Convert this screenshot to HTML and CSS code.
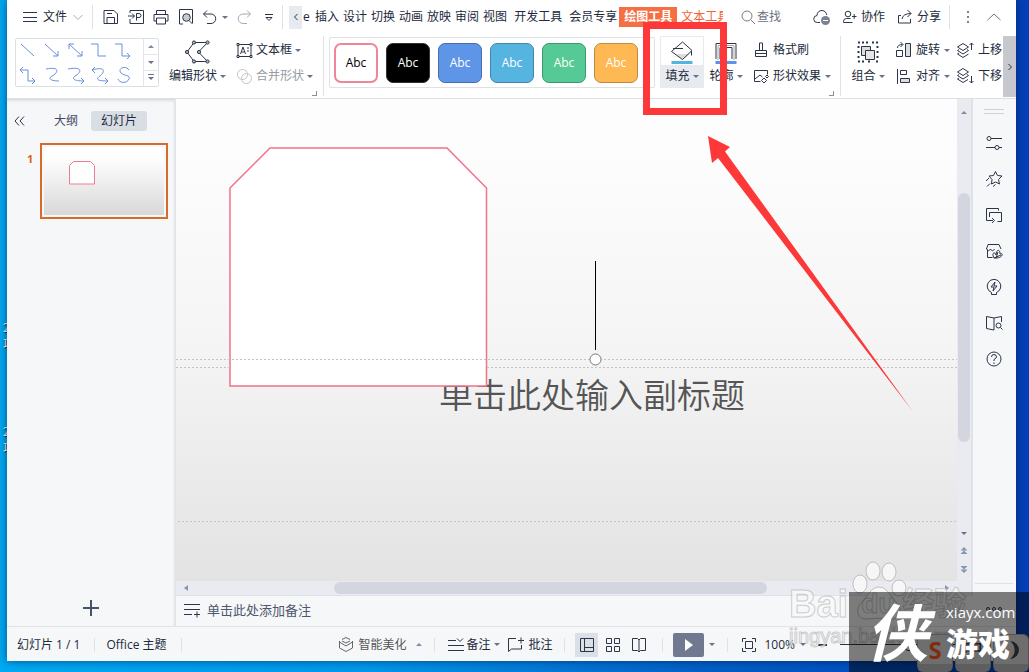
FILE: index.html
```html
<!DOCTYPE html>
<html lang="zh-CN">
<head>
<meta charset="utf-8">
<title>WPS 演示</title>
<link rel="stylesheet" href="styles.css">
</head>
<body>
<div class="desk-labels" aria-hidden="true"><span>2</span><span>项</span><span class="second">2</span><span>项</span></div>
<div class="window">
  <header class="menubar">
    <button class="file"><svg width="16" height="16"><path d="M1 3.500h14M1 8.500h14M1 12.500h14"/></svg><span>文件</span><svg class="soft" width="12" height="12"><path d="M1.500 4l4.500 4.500L10.500 4"/></svg></button>
    <i class="rule"></i>
    <div class="quick">
      <button aria-label="保存"><svg width="18" height="18"><path d="M2 2.500h10l3.500 3.500v9.500h-13.500zM5 15.500v-6h7.500v6M5 5.500h5"/></svg></button>
      <button aria-label="输出PDF"><svg width="18" height="18"><path d="M3 5V2.500h13.500v13H3V11M1 8h6.500M5 5.500l2.500 2.500L5 10.500M9.500 12.500V5.500h2.500q2 0 2 2t-2 2H9.500"/></svg></button>
      <button aria-label="打印"><svg width="18" height="18"><path d="M4.500 6V2.500h9V6M4.500 13H2V6.500h14V13h-2.500M4.500 10h9v6h-9z"/></svg></button>
      <button aria-label="打印预览"><svg width="18" height="18"><path d="M6 16H2.500V1.500h13V15M15.500 16l-3-3"/><circle cx="9.500" cy="9.500" r="3.800" fill="#c8ccd2"/></svg></button>
      <button class="undo" aria-label="撤销"><svg width="18" height="18"><path d="M6 2.500L2.500 6 6 9.500M2.500 6H10a4.500 4.500 0 010 9.500H6"/></svg><b class="caret"></b></button>
      <button aria-label="恢复"><svg class="soft" width="18" height="18"><path d="M12 2.500L15.500 6 12 9.500M15.500 6H8A4.500 4.500 0 008 15.500h4"/></svg></button>
      <button aria-label="自定义"><svg width="10" height="10"><path d="M1 2.500h8M2 5.500l3 3 3-3z" stroke-width="1"/></svg></button>
    </div>
    <i class="rule"></i>
    <button class="tab-scroll" aria-label="向左滚动"><svg width="8" height="10"><path d="M5.500 2l-3 3 3 3"/></svg></button>
    <nav class="tabs">
      <a href="#" class="cut">e</a><a href="#">插入</a><a href="#">设计</a><a href="#">切换</a><a href="#">动画</a><a href="#">放映</a><a href="#">审阅</a><a href="#">视图</a><a href="#" class="wide">开发工具</a><a href="#" class="wide">会员专享</a><a href="#" class="active">绘图工具</a><a href="#" class="context">文本工具</a>
    </nav>
    <div class="account">
      <button class="search"><svg width="16" height="16"><circle cx="7" cy="7" r="5"/><path d="M11 11l4 4"/></svg>查找</button>
      <button class="cloud" aria-label="云同步"><svg width="18" height="18"><path d="M7 14.500H4.500a3.500 3.500 0 01-.5-7C4 4 6.500 2.500 9 2.500s4.500 2 4.700 4.500"/><circle cx="12.500" cy="12.500" r="4.500" fill="#7b8291" stroke="none"/><path d="M10 12.500h5" stroke="#fff"/></svg></button>
      <button><svg width="15" height="16"><circle cx="6" cy="5" r="2.800"/><path d="M1.500 13.500v-1q0-3 3-3h4M1.500 13.500h9M10 7.500h4.500M12.200 5v5"/></svg>协作</button>
      <button class="share"><svg width="16" height="16"><path d="M4 6.500H1.500v7.500h12V10M5 10q1-5.500 9-5.500M10.500 1l3.500 3.500L10.500 8"/></svg>分享</button>
      <i class="rule"></i>
      <button class="more" aria-label="更多"><svg width="4" height="14"><path d="M2 1v2M2 6v2M2 11v2"/></svg></button>
      <button class="fold" aria-label="折叠功能区"><svg width="16" height="12"><path d="M1.500 9L8 3l6.500 6"/></svg></button>
    </div>
  </header>

  <section class="ribbon">
    <div class="lines">
      <svg width="118" height="48"><g>
        <path d="M5 5l13 12M29 5l13 12M42 12v5h-5M53 5l13 12M53 10V5h5M66 12v5h-5M75 5h7v12h8M99 5h7v12h8M111 14l3 3-3 3"/>
        <path d="M4 31h8v11h7M7 28l-3 3 3 3M16 39l3 3-3 3M30 30c16-3 11 5 6 7-5 3 0 5 7 5M52 30c16-3 13 4 7 7-5 4 3 5 9 5M65 39l3 3-3 3M79 28l-3 3 3 3M76 31c14-4 13 2 8 6-6 4 0 5 8 5M89 39l3 3-3 3M113 31c-3-5-12-2-8 3 3 3 10 2 8 6-2 5-10 4-11 0"/></g></svg>
      <div class="spin"><button aria-label="上一行"><b class="caret up"></b></button><button aria-label="下一行"><b class="caret"></b></button><button class="all" aria-label="全部"><b class="caret"></b></button></div>
    </div>
    <button class="tall edit"><svg width="28" height="26"><path d="M10 3.500h13.500l-9 9.500 9 9.500H10L3 13z"/><g fill="#aeb4bd"><circle cx="10" cy="3.500" r="1.600"/><circle cx="23.500" cy="3.500" r="1.600"/><circle cx="15" cy="13" r="1.600"/><circle cx="23.500" cy="22.500" r="1.600"/><circle cx="10" cy="22.500" r="1.600"/><circle cx="3" cy="13" r="1.600"/></g></svg><span>编辑形状<b class="caret"></b></span></button>
    <div class="pair textpair">
      <button><svg width="17" height="17"><path d="M2 2.500h13v12H2z"/><path fill="#fff" d="M1 1.500h2v2H1zM14 1.500h2v2h-2zM1 13.500h2v2H1zM14 13.500h2v2h-2z"/><path d="M4.500 12L7 5l2.500 7M5.500 10h3M11 6h2M11 9h2"/></svg>文本框<b class="caret"></b></button>
      <button class="disabled"><svg width="17" height="17"><circle cx="6.500" cy="6.500" r="5"/><circle cx="10.500" cy="10.500" r="5"/></svg>合并形状<b class="caret"></b></button>
      <i class="corner"></i>
    </div>
    <i class="rule"></i>
    <div class="styles">
      <button class="s1">Abc</button><button class="s2">Abc</button><button class="s3">Abc</button><button class="s4">Abc</button><button class="s5">Abc</button><button class="s6">Abc</button>
    </div>
    <button class="tall fill"><svg width="26" height="26"><path d="M7 15h14l-7.500 5.500z" fill="#ddd" stroke="none"/><path d="M4 9.500h10M2.500 12.500L13.500 3l9.500 8.500-9.500 9zM22.500 12v4.500"/><path d="M2.500 23.500h21" stroke="#55b4e0" stroke-width="3"/></svg><span>填充<b class="caret"></b></span></button>
    <button class="tall outline"><svg width="26" height="26"><path d="M3 20V4.500h20V20M7 20V8.500h12V20"/><path d="M5 21V6.500h16V21" stroke="#aaa"/><path d="M2.500 23.500h21" stroke="#5b94e8" stroke-width="3"/></svg><span>轮廓<b class="caret"></b></span></button>
    <div class="pair effects">
      <button><svg width="16" height="18"><path d="M6.500 9V2h3v7M2.500 9.500h11v6h-11zM3 12.500h10"/></svg>格式刷</button>
      <button><svg width="16" height="17"><path d="M7.500 13.500H1.500V2.500h13v4M2 11l5-4 2.500 2M8.500 12.500L11 10l2.500 2.500L11 15zM12.500 8.500L14 7l1.500 1.500L14 10z"/></svg>形状效果<b class="caret"></b></button>
      <i class="corner"></i>
    </div>
    <i class="rule"></i>
    <button class="tall group"><svg width="26" height="26"><path d="M6.500 7.500h9v9h-9z" fill="#ddd"/><path d="M10.500 11.500h9v9h-9z" fill="#e6e6e6"/><path d="M3 3.500h2M7 3.500h2M11 3.500h2M17 3.500h2M21 3.500h2M3 22.500h2M7 22.500h2M13 22.500h2M21 22.500h2M3.500 7v2M3.500 12v2M3.500 17v2M22.500 7v2M22.500 12v2M22.500 17v2" stroke-width="2"/></svg><span>组合<b class="caret"></b></span></button>
    <div class="pair arrange">
      <button><svg width="17" height="17"><path d="M10.500 1.500h5v13h-5z" fill="#ddd"/><path d="M1.500 8.500h6v6h-6zM2.500 6q0-3.500 5-3.500M5.500 0l2.500 2.500-2.500 2.500"/></svg>旋转<b class="caret"></b></button>
      <button><svg width="17" height="17"><path d="M2.500 1v15M5.500 2.500h6v4h-6z"/><path d="M5.500 10.500h9v4h-9z" fill="#ddd"/></svg>对齐<b class="caret"></b></button>
    </div>
    <div class="pair order">
      <button><svg width="18" height="18"><path d="M1.500 6L7 2.500 12.500 6 7 9.500zM3 8.500l-1.500 1L7 13l5.500-3.500-1.500-1M3 12l-1.500 1L7 16.500l5.500-3.500M15.500 9V2M13.500 4l2-2 2 2"/></svg>上移</button>
      <button><svg width="18" height="18"><path d="M1.500 5L7 1.500 12.500 5 7 8.500zM3 7.500l-1.500 1L7 12l5.500-3.500-1.500-1M3 11l-1.500 1L7 15.500l5-3M15.500 9v7M13.500 14l2 2 2-2"/></svg>下移</button>
    </div>
    <button class="ribbon-next" aria-label="向右滚动"><svg width="8" height="10"><path d="M2.500 2l3 3-3 3"/></svg></button>
  </section>

  <main class="work">
    <aside class="thumbs">
      <div class="switch"><button class="collapse" aria-label="收起"><svg width="14" height="14"><path d="M6 2.500L2 7l4 4.500M11 2.500L7 7l4 4.500"/></svg></button><button>大纲</button><button class="on">幻灯片</button></div>
      <div class="thumb-row"><span>1</span><a href="#" class="thumb" aria-label="幻灯片 1"><svg width="120" height="68"><path d="M25.500 18.500l4-4h17l4 4v18.500h-25z" fill="#fff" stroke="#ef7c91"/></svg></a></div>
      <button class="add" aria-label="新建幻灯片"><svg width="18" height="18"><path d="M9 1v16M1 9h16" stroke="#47516c" stroke-width="2"/></svg></button>
    </aside>
    <section class="center">
      <div class="slide">
        <h1>单击此处输入副标题</h1>
        <svg class="drawing" width="100%" height="100%">
          <path d="M54 89l40-40h177l39.500 40v198H54z" fill="#fff" stroke="#ee7488" stroke-width="1.500"/>
          <g stroke="#c4c4c4" stroke-dasharray="2 2"><line x1="0" y1="260.500" x2="100%" y2="260.500"/><line x1="0" y1="268.500" x2="54" y2="268.500"/><line x1="311" y1="268.500" x2="100%" y2="268.500"/><line x1="2" y1="422.500" x2="100%" y2="422.500"/></g>
          <path d="M419.500 162v89" stroke="#000"/><circle cx="419.500" cy="260.500" r="5.500" fill="#fff" stroke="#777"/>
        </svg>
      </div>
      <div class="vscroll"><b class="caret up"></b><i class="track"></i><b class="caret"></b><b class="double up2"></b><b class="double"></b></div>
      <div class="hscroll"><b class="left"></b><i></i><b class="right"></b></div>
      <button class="notes"><svg width="18" height="16"><path d="M1 2.500h16M1 7.500h16M1 12.500h8M11 12.500h6M14 9.500v6"/></svg>单击此处添加备注</button>
    </section>
    <aside class="tools">
      <i class="grip"></i>
      <button aria-label="设置"><svg width="18" height="18"><circle cx="4" cy="4.500" r="2"/><path d="M6 4.500h11M1 13.500h9M14 13.500h3"/><circle cx="12" cy="13.500" r="2"/></svg></button>
      <button aria-label="动画"><svg width="18" height="18"><path d="M10.500 1.500l2 4 4.500.500-3.500 3.500 1 4.500-4-2-4 2 .5-4.500L4 6l4.500-.5zM1 11l3-3M2 16.500l3-3M8 16.500l2.500-2"/></svg></button>
      <button aria-label="切换"><svg width="18" height="18"><path d="M13.500 4.500V2.500H1.500v12H8M4.500 11V6.500h12v9h-4M7 12l2.500 2.500L7 17"/></svg></button>
      <button aria-label="素材"><svg width="18" height="18"><path d="M2.500 8v7.500h5M1.500 7L3 2.500h11L16 7M1.500 6.500q2 4 4 .5 2 3.500 4 0"/><path d="M9 16c-3-5 1-7 2-3 0-5 4-7 4-1 4-2 3 5-6 4zM9 16l7-3M11 16l2-6"/></svg></button>
      <button aria-label="智能"><svg width="18" height="18"><path d="M6.500 14.500a6.800 6.800 0 115 0V16.500h-5zM10 4L6 9h3l-1 4 4-5H9z"/></svg></button>
      <button aria-label="查阅"><svg width="18" height="18"><path d="M9 4L1.500 2.500v12L9 16V4l7.500-1.500V8"/><circle cx="13.500" cy="11.500" r="2.500"/><path d="M15.500 13.500l2 2"/></svg></button>
      <button aria-label="帮助"><svg width="18" height="18"><circle cx="9" cy="9" r="7"/><path d="M6.500 7q0-2.500 2.500-2.500T11.500 7Q11.500 8 9 9.500V11M9 12.500v1.500"/></svg></button>
      <button class="dots" aria-label="更多工具"><svg width="18" height="6"><circle cx="3" cy="3" r="1.500"/><circle cx="9" cy="3" r="1.500"/><circle cx="15" cy="3" r="1.500"/></svg></button>
    </aside>
  </main>

  <footer class="status">
    <span>幻灯片 1 / 1</span><i class="rule"></i><span>Office 主题</span><i class="rule"></i>
    <div class="status-tools">
      <button class="beauty"><svg width="16" height="17"><path d="M4 3.500l4-2 4 2M4 5l4 2 4-2M1.500 5v7L8 15.500l6.500-3.500V5M1.500 6L8 10l6.500-4"/></svg>智能美化<b class="caret up"></b></button>
      <i class="rule"></i>
      <button class="memo"><svg width="18" height="16"><path d="M1 3.500h8M1 8.500h16M1 13.500h16M10 1.500l3 3 3-3"/></svg>备注<b class="caret"></b></button>
      <button class="comment"><svg width="17" height="17"><path d="M9 2.500H1.500v13l3-2.500h10V9M11 4.500h6M14 1.500v6"/></svg>批注</button>
      <i class="rule"></i>
      <div class="views">
      <button class="on" aria-label="普通视图"><svg width="16" height="16"><path d="M1.500 1.500h13v13h-13zM5.500 1.500v13M5.500 10.500h9"/></svg></button>
      <button aria-label="浏览视图"><svg width="16" height="16"><path d="M1.500 1.500h5v5h-5zM9.500 1.500h5v5h-5zM1.500 9.500h5v5h-5zM9.500 9.500h5v5h-5z"/></svg></button>
      <button aria-label="阅读视图"><svg width="16" height="16"><path d="M8 3L6.500 1.500h-5v12h5L8 15l1.500-1.500h5v-12h-5L8 3v12"/></svg></button>
      </div>
      <i class="rule"></i>
      <button class="play" aria-label="放映"><svg width="12" height="14"><path d="M2 1v12l8-6z" fill="#fff" stroke="none"/></svg></button><b class="caret"></b>
      <i class="rule"></i>
      <button class="zoom"><svg width="16" height="16"><path d="M1.500 5V1.500H5M11 1.500h3.500V5M14.500 11v3.500H11M5 14.500H1.500V11M4.500 4.500h7v7h-7z"/></svg>100%<b class="caret"></b></button>
      <button class="minus" aria-label="缩小"></button>
      <input type="range" min="10" max="190" value="100" aria-label="缩放">
    </div>
  </footer>
</div>

<svg class="callout" width="300" height="400" aria-hidden="true"><path d="M3.500 3.500h77v86h-77z" fill="none" stroke="#fd3838" stroke-width="7"/><path d="M65 114l22 11-5 4.500L269.500 389 75 136l-6 5z" fill="#fd3838" stroke="none"/></svg>
<div class="baidu" aria-hidden="true">
  <svg width="64" height="70"><g fill="#fafafa" fill-opacity=".8" stroke="#a9a9a9" stroke-opacity=".7"><ellipse cx="22" cy="10" rx="7" ry="9"/><ellipse cx="38" cy="11" rx="7" ry="9"/><ellipse cx="9" cy="23" rx="7" ry="9"/><ellipse cx="48" cy="27" rx="7" ry="8"/><path d="M28 26c8 0 11 9 17 15 8 8 4 18-6 17-9-1-15-1-22 0-10 1-14-9-6-17 6-6 9-15 17-15z"/></g></svg>
  <div class="baidu-name"><span>Bai</span><span class="du">du</span><span class="cn">经验</span></div>
  <div class="baidu-url">jingyan.baidu.com</div>
</div>
<div class="ime" aria-hidden="true"><span class="sogou">S</span><span>中</span><span><svg width="20" height="20"><path d="M9 1a9 9 0 110 18 11 11 0 000-18z"/></svg></span></div>
<div class="brand"><span class="mark">侠</span><div><small>xiayx.com</small><strong>游戏</strong></div></div>
</body>
</html>
```
FILE: styles.css
```css
* { box-sizing: border-box; }
body {
  position: relative;
  margin: 0;
  height: 100vh;
  min-height: 560px;
  overflow: hidden;
  font: 12px/18px "Open Sans", "Noto Sans CJK SC", sans-serif;
  color: #222b3c;
  background: linear-gradient(90deg, #00aaf3 0%, #0099eb 35%, #0060c8 68%, #0340b8 100%);
}
button, input { font: inherit; color: inherit; }
button { display: inline-flex; align-items: center; justify-content: center; border: 0; padding: 0; background: none; white-space: nowrap; }
a { color: inherit; text-decoration: none; }
svg { flex: none; fill: none; stroke: #2c3547; stroke-width: 1; }
.rule { flex: none; width: 1px; height: 20px; background: #e0e2e6; }
.caret { flex: none; width: 0; height: 0; margin-left: 3px; border: 3px solid transparent; border-top-color: #68728a; border-bottom: 0; }
.caret.up { border-top: 0; border-bottom: 3px solid #7f8ca5; }
.soft { stroke: #a7abb2; }

.desk-labels { position: absolute; top: 318px; left: 3px; width: 8px; display: flex; flex-direction: column; overflow: hidden; color: #fff; font-family: "Noto Sans CJK SC", sans-serif; text-shadow: 1px 1px 1px #023; line-height: 17px; }
.desk-labels .second { margin-top: 70px; }

.window { position: relative; display: flex; flex-direction: column; height: calc(100% - 11px); margin: 0 13px 0 7px; background: #f6f7f9; box-shadow: 0 0 9px rgba(0, 20, 60, .6); }

.menubar { flex: none; display: flex; align-items: center; height: 34px; padding: 0 14px 0 15px; background: #fff; }
.menubar .file { gap: 5px; }
.menubar .rule { height: 24px; margin: 0 5px 0 8px; }
.quick { display: flex; }
.quick button { width: 25px; height: 24px; }
.quick .undo { width: 33px; gap: 0; }
.menubar .quick + .rule { margin: 0 6px 0 1px; }
.tab-scroll { flex: none; width: 13px; height: 23px; background: #e7eaee; }
.tabs { flex: 0 1 420px; min-width: 0; display: flex; gap: 4px; margin-left: 1px; overflow: hidden; line-height: 20px; white-space: nowrap; }
.tabs .cut { width: 8px; flex: none; }
.tabs .wide { margin-left: 3px; }
.tabs .active { margin-left: -2px; padding: 0 5px; background: #f66f43; color: #fff; font-weight: 700; }
.tabs .context { color: #ee6535; }
.account { flex: none; display: flex; align-items: center; margin-left: auto; }
.account button { gap: 4px; }
.account .search { gap: 1px; color: #6c727d; }
.account .search svg { stroke: #777e89; }
.account .cloud { margin: 0 11px 0 32px; }
.account .share { margin-left: 12px; }
.account .rule { margin: 0 0 0 8px; }
.account .more { margin-left: 16px; }
.account .more svg { stroke-width: 2; stroke: #7b8291; }
.account .fold { margin-left: 16px; }
.account .fold svg { stroke: #6c727d; }

.ribbon { flex: none; display: flex; height: 65px; padding: 2px 0 0 8px; background: #fff; border-bottom: 1px solid #dedfe2; }
.ribbon .rule { height: 60px; }
.lines { flex: none; display: flex; width: 144px; height: 49px; margin-top: 2px; border: 1px solid #dcdfe4; border-radius: 2px; }
.lines svg { stroke: #6990dc; flex: 1; }
.spin { width: 15px; display: flex; flex-direction: column; border-left: 1px solid #e3e5e9; }
.spin button { flex: 1; border-bottom: 1px solid #e3e5e9; }
.spin .caret { margin: 0; }
.spin .all { border: 0; }
.spin .all::before { content: ""; position: absolute; width: 6px; height: 1px; margin-bottom: 8px; background: #68728a; }
.tall { flex: none; flex-direction: column; justify-content: flex-start; height: 52px; padding-top: 3px; }
.tall span { display: flex; align-items: center; height: 22px; }
.edit { width: 77px; }
.pair { position: relative; flex: none; display: flex; flex-direction: column; align-items: flex-start; height: 60px; padding-top: 1px; }
.pair button { height: 26px; gap: 4px; }
.pair .caret { margin-left: 0; }
.corner { position: absolute; right: 6px; bottom: 0; width: 5px; height: 5px; border: solid #8991a0; border-width: 0 1px 1px 0; }
.textpair { width: 87px; }
.textpair button { gap: 3px; }
.disabled { color: #969ba4; }
.disabled svg { stroke: #c2c5cb; }
.styles { flex: none; display: flex; gap: 8px; width: 326px; height: 51px; margin: 1px 5px 0; padding: 5px 4px; border: 1px solid #dfe1e5; border-radius: 2px; }
.styles button { width: 44px; height: 40px; border: 1px solid; border-radius: 7px; color: #fff; }
.styles .s1 { background: #fff; border: 2px solid #ef8698; color: #000; }
.styles .s2 { background: #000; border-color: #333; }
.styles .s3 { background: #5f95e6; border-color: #476fae; }
.styles .s4 { background: #56b4e1; border-color: #4287aa; }
.styles .s5 { background: #56ca96; border-color: #3e976f; }
.styles .s6 { background: #feb954; border-color: #c08b40; }
.fill { width: 44px; background: linear-gradient(#fff 28px, #e7eaef 28px); border: 1px solid #e7eaef; padding-top: 2px; }
.outline { width: 44px; }
.effects { width: 87px; margin-left: 5px; }
.group { width: 54px; }
.arrange { width: 61px; }
.order { width: 47px; }
.ribbon-next { flex: none; width: 13px; height: 61px; margin-left: auto; background: #c7c8cd; }

.work { flex: 1; min-height: 0; display: grid; grid-template-columns: 169px 1fr 43px; }
.thumbs { display: flex; flex-direction: column; border-right: 2px solid #e2e5ec; box-shadow: inset 0 3px 4px -3px #bbb; }
.switch { display: flex; align-items: center; padding: 12px 0 0 6px; color: #434c5e; }
.switch button { height: 20px; }
.switch .collapse { width: 14px; margin-right: 27px; }
.switch .on { width: 56px; margin-left: 13px; background: #d9dee5; border-radius: 3px; color: #222b3c; }
.thumb-row { display: flex; gap: 6px; margin: 12px 0 0 20px; }
.thumb-row span { width: 7px; margin-top: 7px; color: #db6317; font-weight: 700; font-size: 11px; }
.thumb { width: 128px; height: 76px; padding: 2px; border: 2px solid #d56c29; }
.thumb svg { display: block; background: linear-gradient(#fff 15%, #d8d8d8); }
.add { align-self: center; margin: auto 0 9px; }

.center { min-width: 0; display: grid; grid-template: 1fr 15px 30px / 1fr 16px; }
.slide { position: relative; overflow: hidden; background: linear-gradient(#fdfdfd 10%, #f5f5f5 50%, #e3e3e3); }
.slide h1 { position: absolute; top: 271px; left: 263px; margin: 0; font: 350 34px/48px "Noto Sans CJK SC", sans-serif; color: #555; white-space: nowrap; }
.drawing { position: absolute; inset: 0; }
.vscroll { grid-row: 1 / 3; grid-column: 2; display: flex; flex-direction: column; align-items: center; padding: 12px 0 23px; background: #e9ebf0; border-right: 2px solid #dfe2e8; }
.vscroll .caret { margin: 0; }
.vscroll .track { flex: none; width: 12px; height: 54%; margin: 79px 0 auto; border-radius: 6px; background: #d3d6de; }
.vscroll .caret:not(.up) { margin-bottom: 12px; }
.double { width: 7px; height: 7px; background: #8795af; clip-path: polygon(0 0, 100% 0, 50% 50%, 100% 50%, 50% 100%, 0 50%, 50% 50%); }
.up2 { margin-bottom: 12px; clip-path: polygon(50% 0, 100% 50%, 50% 50%, 100% 100%, 0 100%, 50% 50%, 0 50%); }
.hscroll { display: grid; grid-template-columns: 150px 433px 1fr; align-items: center; padding: 0 8px; background: #e9ebf0; border-bottom: 1px solid #dfe2e8; }
.hscroll i { height: 12px; border-radius: 6px; background: #d3d6de; }
.left, .right { width: 0; border: 3px solid transparent; border-right: 4px solid #8795af; border-left: 0; }
.right { justify-self: end; border: 3px solid transparent; border-left: 4px solid #8795af; border-right: 0; }
.notes { grid-column: 1 / 3; justify-content: flex-start; gap: 6px; padding: 0 0 3px 7px; font-size: 13px; color: #4d566c; }
.tools { display: flex; flex-direction: column; align-items: center; gap: 16px; padding: 10px 1px 0 0; }
.tools button { height: 20px; }
.grip { width: 20px; height: 5px; margin-bottom: 3px; border: solid #cfd1d5; border-width: 1px 0; }
.tools .dots { width: 38px; height: 43px; padding-top: 8px; margin-top: auto; border-top: 1px solid #dfe1e5; }

.status { flex: none; display: flex; align-items: center; height: 35px; padding: 1px 0 0 10px; border-top: 1px solid #e0e3e8; }
.status .rule { height: 14px; margin: 0 11px 0 14px; }
.status-tools { display: flex; align-items: center; margin-left: auto; }
.status-tools button { gap: 4px; }
.status-tools > .rule { margin: 0 10px 0 12px; }
.beauty { color: #555; }
.beauty svg { stroke: #666; }
.beauty .caret { margin-left: 6px; }
.memo { margin-left: 2px; }
.status-tools .memo { gap: 1px; }
.comment { margin-left: 7px; }
.views { display: flex; gap: 3px; }
.views button { width: 23px; height: 24px; }
.views .on { background: #dbe0e7; }
.play { width: 31px; height: 24px; background: #707990; border-radius: 2px; }
.play + .caret { margin-left: 5px; }
.status-tools .zoom { gap: 7px; margin-left: 3px; }
.zoom .caret { margin-left: -2px; }
.minus { width: 9px; height: 2px; margin: 0 13px 0 12px; background: #2c3547; }
.status-tools input { appearance: none; width: 138px; height: 14px; margin: 0 38px 0 0; background: linear-gradient(#2c3547, #2c3547) center / 100% 1px no-repeat; }
.status-tools input::-webkit-slider-thumb { appearance: none; width: 12px; height: 12px; border: 1px solid #2c3547; border-radius: 50%; background: #f6f7f9; }

.callout { position: absolute; top: 22px; left: 643px; }
.baidu { position: absolute; right: 59px; bottom: 20px; width: 181px; height: 91px; font-family: "Liberation Sans", "Noto Sans CJK SC", sans-serif; color: rgba(250, 250, 250, .8); -webkit-text-stroke: 1px rgba(160, 160, 160, .5); }
.baidu svg { position: absolute; left: 62px; top: 0; }
.baidu-name { position: relative; display: flex; padding-top: 20px; font-size: 38px; font-weight: 700; line-height: 46px; }
.baidu-name .du { width: 41px; margin-left: 13px; font-size: 28px; }
.baidu-name .cn { font-size: 32px; }
.baidu-url { font-size: 20px; line-height: 18px; }
.ime { position: absolute; right: 0; bottom: 0; display: flex; gap: 2px; }
.ime span { display: flex; align-items: center; justify-content: center; width: 36px; height: 38px; border-radius: 6px; background: #ddd; border: 1px solid #aaa; border-bottom: 8px solid #bcbcbc; color: #444; font-size: 20px; }
.ime svg path { fill: #444; stroke: none; }
.ime .sogou { color: #ff5a1c; font-size: 24px; font-weight: 700; }
.brand { position: absolute; right: 0; bottom: 0; display: flex; align-items: center; width: 180px; height: 80px; padding-left: 17px; background: rgba(0, 0, 0, .5); color: #fff; font-family: "Noto Sans CJK SC", sans-serif; }
.mark { flex: none; padding-bottom: 6px; font-size: 62px; font-weight: 700; line-height: 70px; font-style: italic; }
.brand div { display: flex; flex-direction: column; margin-left: 18px; }
.brand small { font: 15px/20px "Open Sans", sans-serif; }
.brand strong { font-size: 32px; font-weight: 900; line-height: 40px; }
```
